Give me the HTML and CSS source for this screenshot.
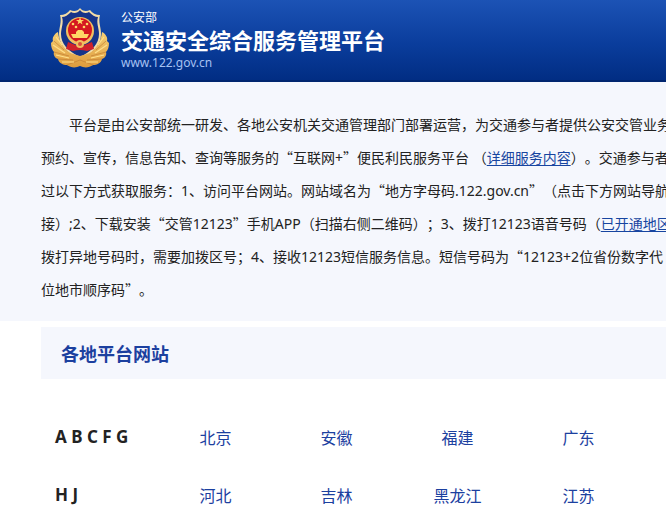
FILE: index.html
```html
<!DOCTYPE html>
<html lang="zh-CN">
<head>
<meta charset="utf-8">
<meta name="viewport" content="width=device-width, initial-scale=1">
<title>交通安全综合服务管理平台</title>
<link rel="stylesheet" href="styles.css">
</head>
<body>
<header class="site-header">
  <svg class="emblem" viewBox="0 0 58 62" aria-hidden="true">
    <defs>
      <linearGradient id="gold" x1="0" y1="0" x2="0" y2="1">
        <stop offset="0" stop-color="#f6cf74"/>
        <stop offset="1" stop-color="#dd9a3c"/>
      </linearGradient>
    </defs>
    <path d="M29 1 C27 4 23 5 19 3 C17 6 13 8 9 8 C11 15 8 20 8 27 C8 38 15 46 29 52 C43 46 50 38 50 27 C50 20 47 15 49 8 C45 8 41 6 39 3 C35 5 31 4 29 1 Z" fill="#f3dca6"/>
    <path d="M29 3 C27 6 23 7 20 5 C17 8 14 10 11 10 C13 16 10 21 10 27 C10 37 17 44 29 50 C41 44 48 37 48 27 C48 21 45 16 47 10 C44 10 41 8 38 5 C35 7 31 6 29 3 Z" fill="#173489"/>
    <path d="M7 25 C3 27 1 31 2 34 L0 36 C0 40 1 43 3 45 C2 48 4 51 7 52 C8 56 12 58 16 58 C20 61 25 61 29 59 C33 61 38 61 42 58 C46 58 50 56 51 52 C54 51 56 48 55 45 C57 43 58 40 58 36 L56 34 C57 31 55 27 51 25 C50 34 46 41 39 46 L29 49 L19 46 C12 41 8 34 7 25 Z" fill="url(#gold)"/>
    <g fill="none" stroke="#c17f35" stroke-width=".7">
      <path d="M3 34 L13 43 M3 45 L18 49 M7 52 L22 53 M16 58 L29 53 M55 34 L45 43 M55 45 L40 49 M51 52 L36 53 M42 58 L29 53"/>
    </g>
    <g fill="none" stroke="#ffe08c" stroke-width="1.200">
      <path d="M5 30 L11 38 M2 38 L14 46 M5 48 L18 51 M11 55 L23 55 M53 30 L47 38 M56 38 L44 46 M53 48 L40 51 M47 55 L35 55"/>
    </g>
    <circle cx="29" cy="24" r="14" fill="#f1c060"/>
    <circle cx="29" cy="23" r="12" fill="#d51820"/>
    <g fill="#ffd866">
      <path d="M29 10 L30 13 H33 L30.600 14.700 L31.500 17.500 L29 15.800 L26.500 17.500 L27.400 14.700 L25 13 H28 Z"/>
      <circle cx="22" cy="17" r="1.300"/><circle cx="36" cy="17" r="1.300"/>
      <circle cx="25" cy="20" r="1.300"/><circle cx="33" cy="20" r="1.300"/>
      <path d="M25 25 L27 23 H31 L33 25 V27 H38 L36 31 H22 L20 27 H25 Z"/>
    </g>
    <path d="M17 35 L22 37 Q29 41 36 37 L41 35 L43 42 L36 44 Q29 42 22 44 L15 42 Z" fill="#cf222b"/>
    <circle cx="29" cy="37" r="4" fill="#f1c060"/>
    <circle cx="29" cy="37" r="2" fill="#d7503a"/>
  </svg>
  <div class="brand">
    <p class="brand-owner">公安部</p>
    <h1 class="brand-name">交通安全综合服务管理平台</h1>
    <p class="brand-url">www.122.gov.cn</p>
  </div>
</header>
<main>
  <section class="intro">
    <p class="intro-text">平台是由公安部统一研发、各地公安机关交通管理部门部署运营，为交通参与者提供公安交管业务<br>预约、宣传，信息告知、查询等服务的“互联网<span class="latin">+</span>”便民利民服务平台<span class="latin"> </span>（<a href="#service">详细服务内容</a>）。交通参与者<br>过以下方式获取服务：<span class="latin">1</span>、访问平台网站。网站域名为“地方字母码<span class="latin">.122.gov.cn</span>”（点击下方网站导航<br>接）<span class="latin">;2</span>、下载安装“交管<span class="latin">12123</span>”手机<span class="latin">APP</span>（扫描右侧二维码）；<span class="latin">3</span>、拨打<span class="latin">12123</span>语音号码（<a href="#area">已开通地区</a><br>拨打异地号码时，需要加拨区号；<span class="latin">4</span>、接收<span class="latin">12123</span>短信服务信息。短信号码为“<span class="latin">12123+2</span>位省份数字代<br>位地市顺序码”。</p>
  </section>
  <section class="sites">
    <h2 class="sites-title">各地平台网站</h2>
    <div class="site-rows">
      <div class="site-row">
        <h3 class="initials">A B C F G</h3>
        <a href="#bj">北京</a><a href="#ah">安徽</a><a href="#fj">福建</a><a href="#gd">广东</a>
      </div>
      <div class="site-row">
        <h3 class="initials">H J</h3>
        <a href="#he">河北</a><a href="#jl">吉林</a><a href="#hl">黑龙江</a><a href="#js">江苏</a>
      </div>
    </div>
  </section>
</main>
</body>
</html>
```
FILE: styles.css
```css
* {
  box-sizing: border-box;
}

body,
h1,
h2,
h3,
p {
  margin: 0;
}

body {
  background: #fff;
  color: #222;
  font-family: "Noto Sans CJK SC", "Noto Sans", sans-serif;
  font-size: 14px;
  overflow-x: hidden;
}

.site-header {
  display: flex;
  align-items: flex-start;
  gap: 12px;
  padding: 7px 0 5px 51px;
  background: linear-gradient(#1c53b5, #0a3d9c 55%, #012d83);
  border-bottom: 2px solid #00256f;
  color: #fff;
}

.emblem {
  flex: none;
  width: 58px;
  height: 62px;
}

.brand {
  white-space: nowrap;
}

.brand-owner {
  font-size: 12px;
  line-height: 20px;
}

.brand-name {
  font-size: 22px;
  line-height: 24px;
}

.brand-url {
  color: #a5c1f2;
  font-family: "Noto Sans", sans-serif;
  font-size: 12px;
  line-height: 24px;
}

.intro {
  padding: 26px 0 15px 41px;
  background: #f5f7fd;
  overflow: hidden;
}

.intro-text {
  line-height: 33px;
  text-indent: 28px;
  text-spacing-trim: space-all;
  white-space: nowrap;
}

.latin {
  font-family: "Noto Sans", sans-serif;
}

.intro-text a {
  color: #1745a0;
  text-underline-offset: 2px;
}

.sites {
  margin: 6px 0 0 41px;
}

.sites-title {
  padding: 0 20px;
  background: #f5f7fd;
  color: #1c409f;
  font-size: 18px;
  line-height: 52px;
}

.site-rows {
  padding: 29px 0 0 14px;
}

.site-row {
  display: grid;
  grid-template-columns: 100px repeat(4, 121px);
  line-height: 58px;
}

.initials {
  font-family: "Noto Sans", sans-serif;
  font-size: 17px;
}

.site-row a {
  color: #1c409f;
  font-size: 16px;
  text-align: center;
  text-decoration: none;
}
```
